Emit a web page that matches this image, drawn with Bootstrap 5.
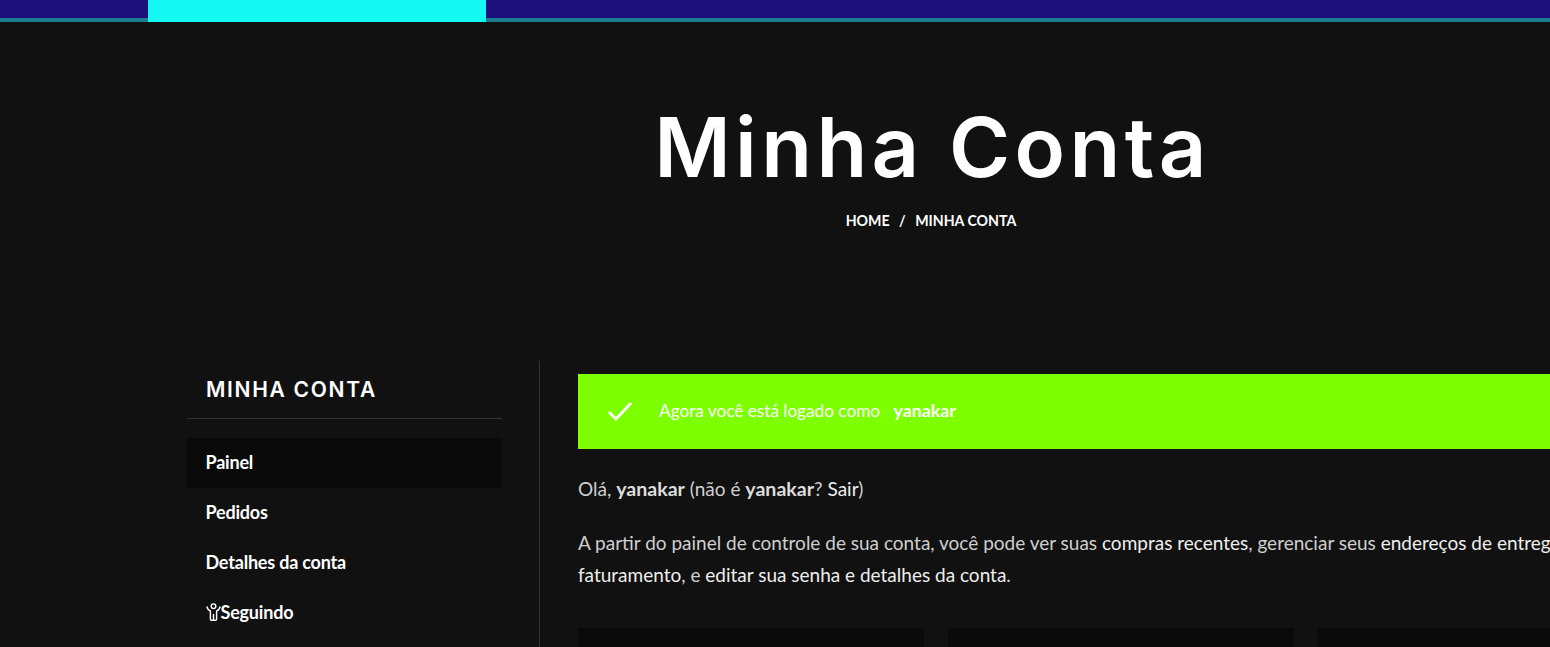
<!DOCTYPE html>
<html lang="pt-BR">
<head>
    <meta charset="UTF-8">
    <meta name="viewport" content="width=device-width, initial-scale=1.0">
    <title>Minha Conta</title>
    <link href="https://cdn.jsdelivr.net/npm/bootstrap@5.3.0/dist/css/bootstrap.min.css" rel="stylesheet">
    <style>
        html, body { overflow: hidden; height: 647px; }
        body { background: #111; font-family: Lato, "Liberation Sans", sans-serif; font-size: 19px; color: #cfcfcf; }
        a { color: inherit; text-decoration: none; }
        .topo { height: 22px; background: #1e0f7a; border-bottom: 4px solid #1c7a92; }
        .topo-item { width: 338px; height: 22px; margin-left: 148px; background: #14f7f2; }
        .pagina { width: 1566px; margin-left: 148px; }
        .cabecalho { height: 339px; padding-top: 75px; }
        .cabecalho h1 { font-family: Inter, sans-serif; font-weight: 600; font-size: 83px; letter-spacing: 4.4px; line-height: 100px; color: #fff; margin: 0; padding-left: 3px; }
        .trilha { font-size: 14.2px; font-weight: 700; color: #fff; line-height: 20px; margin-top: 14px; }
        .trilha span { margin: 0 6px; }
        .lateral { width: 392px; border-right: 1px solid #333; padding: 0 37px 0 39px; }
        .lateral h2 { font-family: Inter, sans-serif; font-size: 21px; font-weight: 600; letter-spacing: 1.7px; color: #fff; margin: 0; padding: 17px 19px 16px; line-height: 24px; border-bottom: 1px solid #333; }
        .menu-conta { margin-top: 19px; }
        .menu-conta a { display: flex; align-items: center; height: 50px; padding: 0 18.5px 2px; color: #fff; font-size: 18px; font-weight: 700; letter-spacing: -.2px; }
        .menu-conta a.ativo { background: #0a0a0a; }
        .principal { width: 1174px; padding: 13px 39px 0 38px; }
        .aviso { height: 75px; background: #7dff00; color: #fff; font-size: 17.2px; padding: 0 0 2px 29px; }
        .aviso svg { margin-right: 26px; }
        .aviso strong { margin-left: 9px; font-size: 17.8px; }
        .principal p { line-height: 32px; margin: 0; }
        .ola { margin-top: 24px !important; }
        .texto { margin-top: 22px !important; }
        .principal b { color: #ddd; font-size: 19.6px; line-height: 1; }
        .principal p a { color: #eee; }
        .caixas { margin-top: 37px; gap: 24px; }
        .caixa { width: 346px; height: 60px; background: #0a0a0a; }
    </style>
</head>
<body>
    <div class="topo"><div class="topo-item"></div></div>
    <div class="pagina">
        <div class="cabecalho text-center">
            <h1>Minha Conta</h1>
            <div class="trilha"><a href="#">HOME</a><span> / </span><a href="#">MINHA CONTA</a></div>
        </div>
        <div class="d-flex">
            <aside class="lateral flex-shrink-0">
                <h2>MINHA CONTA</h2>
                <nav class="menu-conta">
                    <a class="ativo" href="#">Painel</a>
                    <a href="#">Pedidos</a>
                    <a href="#">Detalhes da conta</a>
                    <a href="#"><svg width="15" height="18" viewBox="0 0 15 18" fill="none" stroke="#fff" stroke-width="1.4"><circle cx="7.5" cy="3.2" r="2.3"/><path d="M.8 3.5C1.5 6 3 7.5 4.4 8V16.2Q4.4 17.2 5.4 17.2H9.6Q10.6 17.2 10.6 16.2V8C12 7.5 13.5 6 14.2 3.5M7.5 11V17"/></svg>Seguindo</a>
                </nav>
            </aside>
            <main class="principal flex-shrink-0">
                <div class="aviso d-flex align-items-center">
                    <svg width="26" height="20" viewBox="0 0 26 20" fill="none" stroke="#fff" stroke-width="2.8"><path d="M2 11 9 18 24 2"/></svg>
                    <span>Agora você está logado como <strong>yanakar</strong></span>
                </div>
                <p class="ola">Olá, <b>yanakar</b> (não é <b>yanakar</b>? <a href="#">Sair</a>)</p>
                <p class="texto">A partir do painel de controle de sua conta, você pode ver suas <a href="#">compras recentes</a>, gerenciar seus <a href="#">endereços de entrega e faturamento</a>, e <a href="#">editar sua senha e detalhes da conta</a>.</p>
                <div class="caixas d-flex">
                    <div class="caixa"></div>
                    <div class="caixa"></div>
                    <div class="caixa"></div>
                </div>
            </main>
        </div>
    </div>
</body>
</html>
